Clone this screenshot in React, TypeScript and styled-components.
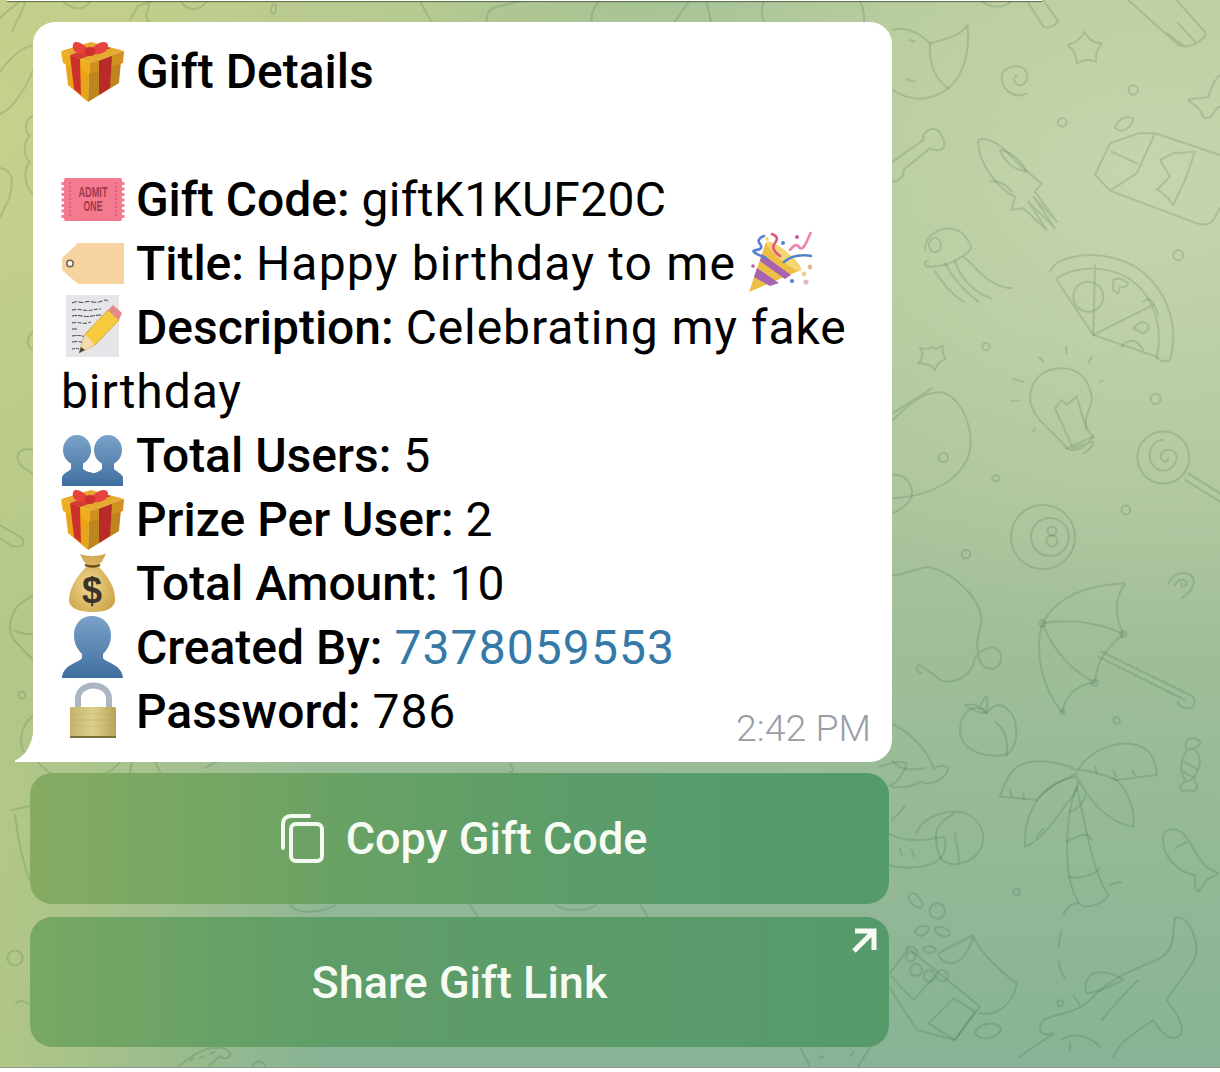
import React from "react";
import styled, { createGlobalStyle } from "styled-components";

const GlobalStyle = createGlobalStyle`
  html, body {
    margin: 0;
    padding: 0;
    background: #fff;
  }
`;

const Page = styled.div`
  position: relative;
  width: 1220px;
  height: 1067px;
  overflow: hidden;
  font-family: Roboto, "Liberation Sans", sans-serif;
  background:
    radial-gradient(560px 460px at 1150px 180px, rgba(200, 214, 176, 0.95), rgba(200, 214, 176, 0) 100%),
    radial-gradient(300px 60px at 720px 0px, rgba(160, 192, 150, 0.8), rgba(160, 192, 150, 0) 100%),
    radial-gradient(520px 520px at 0px 120px, rgba(198, 208, 140, 1), rgba(198, 208, 140, 0) 100%),
    linear-gradient(90deg, rgba(184, 202, 132, 0.85) 0px, rgba(184, 202, 132, 0) 320px),
    linear-gradient(180deg, #b3c892 0%, #a9c39a 45%, #88b394 100%);
  border-bottom: 1px solid #8a9a8c;
`;

const Doodles = styled.svg`
  position: absolute;
  inset: 0;
  width: 1220px;
  height: 1067px;
  fill: none;
  stroke: #2c5a3c;
  stroke-opacity: 0.17;
  stroke-width: 2;
  stroke-linecap: round;
  stroke-linejoin: round;
`;

const TopEdge = styled.div`
  position: relative;
  height: 1px;
  margin: 0 178px 0 7px;
  background: #fff;
  box-shadow: 0 1px 1px rgba(40, 60, 30, 0.75);
`;

const Thread = styled.div`
  position: relative;
  width: 859px;
  margin: 21px 0 0 33px;
`;

const Bubble = styled.div`
  position: relative;
  box-sizing: border-box;
  height: 740px;
  padding: 18px 28px 0;
  background: #fff;
  border-radius: 22px 22px 22px 0;
  font-size: 48px;
  line-height: 64px;
  color: #000;
`;

const Tail = styled.svg`
  position: absolute;
  left: -18px;
  bottom: 0;
  width: 19px;
  height: 36px;
  fill: #fff;
`;

const Label = styled.span`
  font-weight: 500;
`;

const Value = styled.span`
  font-weight: 400;
  letter-spacing: 0.9px;
`;

const CodeValue = styled(Value)`
  letter-spacing: 0.3px;
`;

const TitleValue = styled(Value)`
  letter-spacing: 1.2px;
`;

const UserLink = styled.span`
  font-weight: 400;
  letter-spacing: 1.1px;
  color: #3579a8;
`;

const Time = styled.span`
  position: absolute;
  right: 21px;
  bottom: 12px;
  font-size: 37.5px;
  line-height: 44px;
  font-weight: 300;
  color: #989ea6;
`;

const EmojiBox = styled.svg`
  display: inline-block;
  width: 64px;
  height: 64px;
  margin: -1px -1px 0 0;
  vertical-align: top;
`;

const Keyboard = styled.div`
  display: grid;
  gap: 13px;
  width: 859px;
  margin: 11px 0 0 -3px;
`;

const KeyButton = styled.button<{ $alt?: boolean }>`
  position: relative;
  display: flex;
  align-items: center;
  justify-content: center;
  gap: 20px;
  height: ${(p) => (p.$alt ? "130px" : "131px")};
  padding: 0;
  border: 0;
  border-radius: 22px;
  background: ${(p) =>
    p.$alt
      ? "linear-gradient(90deg, #78a864 0%, #5f9d68 35%, #569a6c 100%)"
      : "linear-gradient(90deg, #86ab62 0%, #6aa264 35%, #5a9c6a 65%, #559a6c 100%)"};
  color: #f6fbf3;
  font-family: inherit;
  font-size: 45px;
  font-weight: 500;
`;

const CopyGlyph = styled.svg`
  width: 46px;
  height: 50px;
  margin: -2px 0 0 8px;
  fill: none;
  stroke: #f4faf1;
  stroke-width: 4;
  stroke-linecap: round;
`;

const ShareArrow = styled.svg`
  position: absolute;
  top: 10px;
  right: 12px;
  width: 26px;
  height: 26px;
  fill: none;
  stroke: #f6fbf3;
  stroke-width: 5;
`;

const Emoji = {
  Gift: () => (
    <EmojiBox viewBox="0 0 64 64">
      <polygon points="4,20 28,34 27,63 7,46" fill="#e9a418" />
      <polygon points="28,34 60,22 58,44 27,63" fill="#bd851c" />
      <polygon points="0,12 30,3 63,12 29,24" fill="#e6ab2e" />
      <polygon points="0,12 29,24 28,35 2,24" fill="#eeae1e" />
      <polygon points="29,24 63,12 62,24 28,35" fill="#cf9020" />
      <polygon points="9,16 19,20 20,56 13,50" fill="#cb302c" />
      <polygon points="38,22 51,17 49,49 38,56" fill="#b92b28" />
      <polygon points="9,16 19,20 50,9 40,6" fill="#d53a34" />
      <path d="M29 12C22 3 12 0 12 6c-2 6 6 11 17 9zM29 12C36 2 46 1 47 6c1 6-7 11-18 9z" fill="#e6433f" />
      <ellipse cx="29" cy="12.500" rx="5.500" ry="4.500" fill="#cf302e" />
    </EmojiBox>
  ),
  Ticket: () => (
    <EmojiBox viewBox="0 0 64 64">
      <rect x="3" y="11" width="58" height="43" rx="2" fill="#f47b8f" />
      <path d="M2 15v36M62 15v36" stroke="#f47b8f" strokeWidth="3" strokeDasharray="3 2.500" fill="none" />
      <path d="M9 15v35M55 15v35" stroke="#d25f76" strokeWidth="1.500" strokeDasharray="2 2" fill="none" />
      <text x="32" y="30" textAnchor="middle" fontFamily="'Liberation Sans', sans-serif" fontSize="14" fontWeight="700" fill="#a3394a" textLength="29" lengthAdjust="spacingAndGlyphs">ADMIT</text>
      <text x="32" y="44" textAnchor="middle" fontFamily="'Liberation Sans', sans-serif" fontSize="14" fontWeight="700" fill="#a3394a" textLength="19" lengthAdjust="spacingAndGlyphs">ONE</text>
    </EmojiBox>
  ),
  Tag: () => (
    <EmojiBox viewBox="0 0 64 64">
      <path d="M63 12H17L2 26Q1 27 1 29V37Q1 39 2 40L17 53H63Z" fill="#f8d3a2" />
      <circle cx="9" cy="32.500" r="3.200" fill="#fff" stroke="#75654f" strokeWidth="1.600" />
    </EmojiBox>
  ),
  Memo: () => (
    <EmojiBox viewBox="0 0 64 64">
      <rect x="5" y="0" width="53" height="62" fill="#e6e6ea" />
      <g stroke="#3f3f46" strokeWidth="1" fill="none">
        <path d="M11 8q4-2 7-1t6 0 8 0 9-1 6 0" strokeDasharray="5 1.500" />
        <path d="M11 15q6-1 11 0t9 0 9-1" strokeDasharray="4 1.500" />
        <path d="M11 21q5-1 10 0t10 0 10-1" strokeDasharray="5 1" />
        <path d="M11 28q5-1 9 0t10-1" strokeDasharray="4 1.500" />
        <path d="M11 34h5" />
        <path d="M11 41q6-1 10 0t9-1" strokeDasharray="4 1" />
        <path d="M11 47q5-1 9 0t6-1" strokeDasharray="5 1.500" />
        <path d="M11 54q4-1 8 0" strokeDasharray="3 1" />
      </g>
      <polygon points="18,58 24,39 47,15 58,25 34,50" fill="#f6cb3d" stroke="#c99b2a" strokeWidth="0.800" />
      <polygon points="18,58 24,39 34,50" fill="#f3d9ad" />
      <polygon points="18,58 20,52 24,55" fill="#444" />
      <polygon points="47,15 52,10 61,18 58,25" fill="#e58a8c" />
    </EmojiBox>
  ),
  Party: () => (
    <EmojiBox viewBox="0 0 64 64">
      <polygon points="1,61 18,11 53,39" fill="#eebf47" />
      <path d="M9 37L31 52L22 55L6 46ZM14 23L43 44L37 48L12 30Z" fill="#a862b2" />
      <ellipse cx="36" cy="25" rx="5" ry="22" transform="rotate(-50 36 25)" fill="#f6d672" />
      <g fill="none" strokeWidth="2.600" strokeLinecap="round">
        <path d="M16 5Q8 8 12 13t-4 6 10 8" stroke="#5b7fd0" />
        <path d="M24 3q8 3 3 9t5 13" stroke="#e0567c" />
        <path d="M42 19q6-8 9-3t8-6 3-7" stroke="#ec82ae" />
        <path d="M36 31Q46 22 64 25" stroke="#4f86c6" />
      </g>
      <g>
        <circle cx="35" cy="12" r="2" fill="#5b7fd0" />
        <circle cx="49" cy="6" r="2" fill="#c85a9e" />
        <circle cx="5" cy="35" r="1.800" fill="#c85a9e" />
        <circle cx="44" cy="50" r="2" fill="#5b7fd0" />
        <circle cx="56" cy="43" r="2.400" fill="#ecd18c" />
        <circle cx="62" cy="36" r="2.400" fill="#e3b98c" />
        <circle cx="58" cy="51" r="2.600" fill="#e5b7cf" />
        <circle cx="19" cy="8" r="1.800" fill="#f0d25a" />
      </g>
    </EmojiBox>
  ),
  Users: () => (
    <EmojiBox viewBox="0 0 64 64">
      <defs>
        <linearGradient id="usersFill" gradientUnits="userSpaceOnUse" x1="0" y1="12" x2="0" y2="63">
          <stop offset="0" stopColor="#7ba2c9" />
          <stop offset="1" stopColor="#3f6f9f" />
        </linearGradient>
      </defs>
      <ellipse cx="47" cy="27" rx="14" ry="15" fill="url(#usersFill)" />
      <path d="M41 38V46C38 49 32 50 30 52L41 63H62V54C60 50 56 49 53 46V38Z" fill="url(#usersFill)" />
      <ellipse cx="16" cy="27" rx="14" ry="15" fill="url(#usersFill)" />
      <path d="M10 38V46C6 50 1 50 1 56V63H42V56C40 50 26 50 22 46V38Z" fill="url(#usersFill)" />
    </EmojiBox>
  ),
  MoneyBag: () => (
    <EmojiBox viewBox="0 0 64 64">
      <defs>
        <radialGradient id="bagFill" cx="0.45" cy="0.55" r="0.7">
          <stop offset="0" stopColor="#f0d890" />
          <stop offset="1" stopColor="#c79a3c" />
        </radialGradient>
      </defs>
      <path d="M19 3Q30 7 45 3Q42 10 37 15Q55 33 54 50Q52 61 32 61Q10 61 8 50Q8 33 26 15Q22 10 19 3Z" fill="url(#bagFill)" />
      <path d="M24 14Q32 17 39 14" stroke="#6d4d1c" strokeWidth="2.400" fill="none" />
      <text x="31" y="52" textAnchor="middle" fontFamily="'Liberation Sans', sans-serif" fontSize="36" fontWeight="700" fill="#3a3428">$</text>
    </EmojiBox>
  ),
  Bust: () => (
    <EmojiBox viewBox="0 0 64 64">
      <defs>
        <linearGradient id="bustFill" x1="0" y1="0" x2="0" y2="1">
          <stop offset="0" stopColor="#7ba2c9" />
          <stop offset="1" stopColor="#3f6f9f" />
        </linearGradient>
      </defs>
      <path d="M31 1c-11 0-18 8-18 19 0 9 4 15 8 19v4c-3 5-19 6-20 20h61c-1-14-17-15-20-20v-4c4-4 8-10 8-19C50 9 42 1 31 1z" fill="url(#bustFill)" />
    </EmojiBox>
  ),
  Lock: () => (
    <EmojiBox viewBox="0 0 64 64">
      <defs>
        <linearGradient id="lockFill" x1="0" y1="0" x2="1" y2="0">
          <stop offset="0" stopColor="#c4b46a" />
          <stop offset="0.500" stopColor="#dccf8c" />
          <stop offset="1" stopColor="#b6a55a" />
        </linearGradient>
      </defs>
      <path d="M17 30V20C17 2 48 2 48 20v10" fill="none" stroke="#aab6c2" strokeWidth="6" />
      <rect x="9" y="28" width="46" height="31" rx="1.500" fill="url(#lockFill)" />
      <path d="M9 35h46M9 41h46M9 47h46" stroke="#a8985244" strokeWidth="1.200" />
      <rect x="9" y="57" width="46" height="2" fill="#7d7138" />
    </EmojiBox>
  ),
};

const zoomTop = "translate(880 0) scale(0.3333)";
const zoomBottom = "translate(880 540) scale(0.3333)";

const rightTopPaths = [
  "M38 90C70 80 110 90 150 130C190 120 240 110 262 75C270 130 260 220 205 265C160 300 100 310 38 270",
  "M150 130C145 200 170 240 205 265M90 120L103 125M78 238L103 245",
  "M440 280C400 300 365 265 365 235C365 205 395 195 420 200C445 205 450 245 425 255C405 260 395 235 410 225",
  "M615 95C625 120 640 128 665 130C655 145 645 160 648 185C630 178 610 178 590 190C590 170 585 150 562 135C585 130 600 120 615 95Z",
  "M440 0L490 80Q510 90 535 65L490 0",
  "M745 0L895 135Q930 150 975 110Q980 95 965 85L890 0M895 70L945 125M860 100L915 140",
  "M1020 225C1000 240 990 275 985 290C965 300 940 290 925 300C940 315 960 320 965 340C970 360 990 360 1000 340C1005 330 1010 320 1020 320",
  "M38 485L130 420C125 395 160 375 178 395C185 410 200 425 190 445C175 455 160 450 150 445L70 510C75 530 55 545 38 545",
  "M295 420C320 410 350 425 390 465C430 510 460 530 485 550L465 575L530 665L460 590L525 685L445 605L500 690L430 625L395 630L405 590C360 570 290 490 295 420Z",
  "M360 450C390 450 430 490 440 515C400 510 370 480 360 450M330 545C350 540 375 550 395 575",
  "M645 525L690 430L775 400L825 400L1020 465M690 572L950 670Q985 680 1000 660L1020 625M645 525L690 572L770 520L825 400M695 455L770 490",
  "M835 570L860 590L880 615L915 540L945 455L880 460L840 480L870 530L830 570",
  "M705 380Q730 340 760 355Q755 385 725 392Q710 392 705 380Z",
  "M135 750C135 700 190 675 230 690C255 700 280 740 270 750C240 780 200 800 150 800C130 800 130 780 145 785",
  "M165 815C190 850 210 880 250 905M195 790C215 830 250 870 295 905M225 785C240 830 280 880 335 895M250 770C290 800 320 860 395 865",
  "M510 815C530 760 680 740 780 810C860 870 900 980 870 1080C850 1090 835 1080 830 1070L640 1005L530 840",
  "M530 835C620 780 760 800 815 915C840 970 840 1030 830 1075M645 795L640 1005L820 915",
  "M700 840Q720 830 745 850Q740 865 720 860L715 880L700 870ZM760 985Q785 955 805 975Q810 990 790 1000ZM790 905Q815 880 835 945M725 1040Q760 1000 790 1050",
  "M160 1040C165 1055 175 1040 188 1038C188 1050 185 1060 198 1078C185 1080 175 1085 165 1110C155 1095 140 1090 115 1090C130 1075 130 1055 120 1045C135 1045 150 1050 160 1040Z",
  "M545 1105C490 1105 450 1140 450 1195C455 1260 520 1290 560 1345L640 1310C590 1260 640 1230 635 1190C625 1130 590 1105 545 1105Z",
  "M560 1345Q600 1365 640 1310M575 1345L640 1325Q640 1345 610 1360M525 1225L545 1200L560 1215L590 1190L620 1290M525 1225L575 1335",
  "M558 1040L560 1060M478 1072L490 1085M635 1072L625 1088M400 1137L428 1145M395 1202L415 1202M660 1145L668 1142M465 1285L460 1295",
  "M38 1260C80 1220 130 1170 190 1178C250 1200 280 1290 270 1350C250 1440 150 1490 38 1495M38 1240L155 1165",
  "M38 1425C80 1420 100 1460 95 1490C90 1510 60 1530 38 1540",
  "M925 1420L1020 1480M915 1440L1020 1505",
  "M850 1320C815 1320 800 1360 815 1390C835 1425 885 1415 890 1375C890 1350 860 1340 845 1360C835 1380 860 1395 865 1375",
];

const rightTopDots: [number, number, number][] = [
  [760, 270, 14], [547, 367, 13], [895, 766, 15], [318, 1040, 11], [827, 1197, 15],
  [347, 1435, 10], [190, 1373, 14], [738, 1530, 13], [850, 1373, 78],
];

const rightBottomPaths = [
  "M38 105C70 110 110 80 150 82C220 100 300 170 305 240C300 280 285 300 295 345C300 380 320 390 345 385C370 370 370 330 340 322C305 325 285 345 280 370C265 420 215 430 185 422C170 415 135 380 115 375C105 385 110 395 125 400",
  "M865 130C880 90 940 90 942 125C940 150 920 165 905 175M885 135C895 115 920 115 920 130C915 145 900 140 905 130",
  "M487 250C530 170 620 135 735 130C700 180 705 230 730 283C670 250 570 235 487 250Z",
  "M487 250C460 340 490 450 547 517C555 470 590 430 645 428C650 380 660 340 730 283M487 250C520 330 570 390 645 428",
  "M665 335L930 465C950 475 950 500 925 505C905 505 890 495 895 485M655 350L915 480",
  "M320 520C280 480 240 520 240 575C245 640 340 660 385 640C420 610 415 530 380 505C360 490 340 490 320 520Z",
  "M345 545C380 570 385 610 380 648M320 520C310 500 285 490 255 495C275 510 295 520 320 520M320 520C320 500 325 480 320 468C310 480 300 490 300 505",
  "M930 625C905 640 895 690 915 720C935 735 960 690 960 660C955 635 945 625 930 625M905 660L955 690M900 690L945 715M920 630C905 595 945 585 960 605C965 620 945 625 935 625M915 725C885 745 910 760 925 750C945 760 960 745 945 725",
  "M590 690C530 660 440 650 400 690C375 720 360 770 360 770L470 780C510 730 560 720 590 700",
  "M595 690C630 620 760 580 810 640C825 660 830 690 830 705L710 720C660 700 620 690 595 690",
  "M590 710C520 720 430 780 435 920C470 910 520 850 560 790C590 760 600 730 590 710M590 710C620 770 680 850 760 860C770 800 730 730 700 715",
  "M590 740C565 800 555 900 565 990C570 1040 590 1090 610 1100C640 1100 680 1085 685 1065C640 1000 620 870 590 740",
  "M570 815C590 810 610 790 615 770M560 905C590 890 620 870 635 900M565 1010C600 1020 650 1000 660 985",
  "M390 750L395 770M430 760L432 778M490 865L470 890M645 680L650 700M700 690L708 710M755 690L765 705",
  "M690 1035Q710 1025 725 1028M595 1090Q565 1090 550 1125M545 1170Q535 1210 537 1220M537 1265Q540 1295 555 1315M580 1365L600 1395",
  "M850 885C860 860 900 860 925 900C945 930 960 970 985 985L1015 1000L980 1020L955 1055C940 1040 945 1020 945 1005C900 1000 840 950 850 885ZM885 925Q905 915 920 905",
  "M885 1135C910 1120 950 1170 950 1240C930 1300 880 1340 860 1380C880 1410 910 1440 905 1480C880 1510 850 1490 820 1440C780 1470 720 1500 700 1550",
  "M885 1135C875 1190 890 1230 830 1260C760 1290 700 1310 640 1370C600 1420 530 1420 490 1440C470 1470 480 1490 520 1480C500 1500 440 1530 415 1555",
  "M640 1300C680 1290 720 1310 730 1320C690 1340 650 1360 620 1360C610 1340 620 1310 640 1300M665 1440C700 1400 750 1340 775 1320M545 1500C570 1480 620 1480 660 1520M570 1510V1530",
  "M110 1065C85 1050 80 1075 95 1090C115 1110 135 1105 125 1085ZM105 1175C120 1150 155 1155 145 1170C135 1190 115 1195 105 1175ZM165 1165C185 1150 215 1175 210 1185C195 1195 165 1185 165 1165ZM130 1225C145 1210 175 1225 165 1235C150 1240 130 1240 130 1225Z",
  "M30 1300L85 1225L300 1400L225 1500L110 1470L30 1345M80 1235C70 1215 100 1210 115 1240M175 1240L280 1185C290 1220 340 1280 410 1330C400 1400 340 1430 300 1420M175 1245C190 1280 250 1290 280 1190",
  "M35 1310L100 1380L165 1310M145 1450L220 1375L285 1415L225 1500Z",
  "M285 1480C290 1450 350 1440 362 1465C365 1490 300 1510 285 1480ZM25 880C70 905 130 905 190 890C205 920 190 950 170 965C120 990 60 985 25 975M95 930L103 950M60 925L65 945",
  "M110 880C120 840 180 810 240 815C300 830 320 880 305 920C290 960 240 980 205 970C170 965 165 900 170 870C190 830 220 830 225 815M225 880C230 920 240 950 235 972",
  "M36 550C90 580 140 620 160 685C190 670 205 680 205 690C190 720 150 740 120 725C100 740 70 745 36 740M0 680C30 670 60 660 80 670C70 710 40 740 15 740",
];

const rightBottomDots: [number, number, number][] = [
  [258, 42, 13], [710, 541, 10], [410, 1055, 10], [541, 1390, 9], [172, 1113, 23],
  [487, 250, 9], [730, 283, 9], [645, 428, 9], [547, 517, 6],
  [92, 1250, 14], [108, 1290, 18], [148, 1308, 17], [187, 1307, 17],
];

const outerPaths = [
  "M0 18C8 10 14 6 22 0M12 32C16 20 24 12 25 0",
  "M0 72C14 52 26 46 33 46M0 114C12 110 26 88 33 70",
  "M33 116C24 120 24 132 30 136C22 142 24 158 30 162C23 168 24 186 33 194",
  "M0 168C12 170 14 178 10 196C6 206 2 212 0 218",
  "M33 332C26 338 26 346 33 350M33 450C20 446 14 456 20 464C24 470 30 470 33 474",
  "M0 525L22 538C26 546 20 548 12 546L0 538",
  "M33 595C28 600 18 602 14 612C10 620 6 636 18 644C24 652 30 656 33 660M14 630C20 634 26 634 33 634",
  "M33 716C22 724 16 744 26 754",
  "M12 810L30 806M15 815C18 840 24 868 30 880",
  "M16 1003Q22 998 30 1005",
  "M130 20L138 6L150 2L146 16L152 28M62 0C72 12 88 10 90 0M180 0C186 12 200 12 208 0",
  "M272 6C268 14 276 18 276 8C276 4 274 2 272 6Z",
  "M420 0C424 10 432 24 436 26M490 26C484 20 486 8 500 6C510 4 522 0 528 0",
  "M592 26C590 14 594 6 600 0M672 26L690 0M706 0L712 26M764 0C760 10 762 20 766 26",
  "M862 28C866 22 864 10 860 0M980 0C990 8 1004 10 1012 0",
  "M38 762C60 790 105 782 120 762M132 762L130 772M155 762L160 772M205 768C214 762 222 760 228 758",
  "M510 764C514 770 514 772 510 772M892 760C900 772 915 770 925 768M892 820C900 812 905 806 905 806",
  "M290 905C296 914 320 914 336 905M470 905L478 917M556 905C566 912 586 912 596 905M640 905L648 917",
  "M178 1067C190 1056 204 1048 214 1048C224 1046 232 1052 230 1056C226 1060 222 1058 220 1056L208 1067M190 1060L194 1058M200 1058L204 1056M210 1054L214 1052",
  "M252 1067C254 1060 264 1060 266 1067",
  "M800 1047L810 1067M870 1047L858 1067M850 1056L854 1052M820 1058L824 1056",
];

const Wallpaper = () => (
  <Doodles viewBox="0 0 1220 1067">
    <g transform={zoomTop} strokeWidth="6">
      {rightTopPaths.map((d) => (
        <path key={d} d={d} />
      ))}
      {rightTopDots.map(([cx, cy, r]) => (
        <circle key={`${cx}-${cy}`} cx={cx} cy={cy} r={r} />
      ))}
      <ellipse cx="165" cy="735" rx="18" ry="22" />
      <circle cx="625" cy="890" r="45" />
    </g>
    <g transform={zoomBottom} strokeWidth="6">
      {rightBottomPaths.map((d) => (
        <path key={d} d={d} />
      ))}
      {rightBottomDots.map(([cx, cy, r]) => (
        <circle key={`${cx}-${cy}`} cx={cx} cy={cy} r={r} />
      ))}
    </g>
    {outerPaths.map((d) => (
      <path key={d} d={d} />
    ))}
    <circle cx="22" cy="695" r="3.500" />
    <circle cx="15" cy="958" r="7.500" />
    <circle cx="1043" cy="537" r="32" />
    <circle cx="1050" cy="537" r="19" />
    <circle cx="1052" cy="531" r="4.500" />
    <circle cx="1052" cy="541" r="5.500" />
  </Doodles>
);

export default function App() {
  return (
    <>
      <GlobalStyle />
      <Page>
        <Wallpaper />
        <TopEdge />
        <Thread>
          <Bubble>
            <Tail viewBox="0 0 19 36">
              <path d="M19 0C18 14 13 29 0 34.500Q-1 36 2 36H19Z" />
            </Tail>
            <Emoji.Gift /> <Label>Gift Details</Label>
            <br />
            <br />
            <Emoji.Ticket /> <Label>Gift Code:</Label> <CodeValue>giftK1KUF20C</CodeValue>
            <br />
            <Emoji.Tag /> <Label>Title:</Label> <TitleValue>Happy birthday to me</TitleValue> <Emoji.Party />
            <br />
            <Emoji.Memo /> <Label>Description:</Label> <Value>Celebrating my fake birthday</Value>
            <br />
            <Emoji.Users /> <Label>Total Users:</Label> <Value>5</Value>
            <br />
            <Emoji.Gift /> <Label>Prize Per User:</Label> <Value>2</Value>
            <br />
            <Emoji.MoneyBag /> <Label>Total Amount:</Label> <Value>10</Value>
            <br />
            <Emoji.Bust /> <Label>Created By:</Label> <UserLink>7378059553</UserLink>
            <br />
            <Emoji.Lock /> <Label>Password:</Label> <Value>786</Value>
            <Time>2:42 PM</Time>
          </Bubble>
          <Keyboard>
            <KeyButton>
              <CopyGlyph viewBox="0 0 46 50">
                <path d="M3 35V11C3 6 6 3 11 3H29" />
                <rect x="11" y="11" width="31" height="37" rx="5" />
              </CopyGlyph>
              Copy Gift Code
            </KeyButton>
            <KeyButton $alt>
              Share Gift Link
              <ShareArrow viewBox="0 0 26 26">
                <path d="M4 4H23V23M23 4L3 24" />
              </ShareArrow>
            </KeyButton>
          </Keyboard>
        </Thread>
      </Page>
    </>
  );
}
